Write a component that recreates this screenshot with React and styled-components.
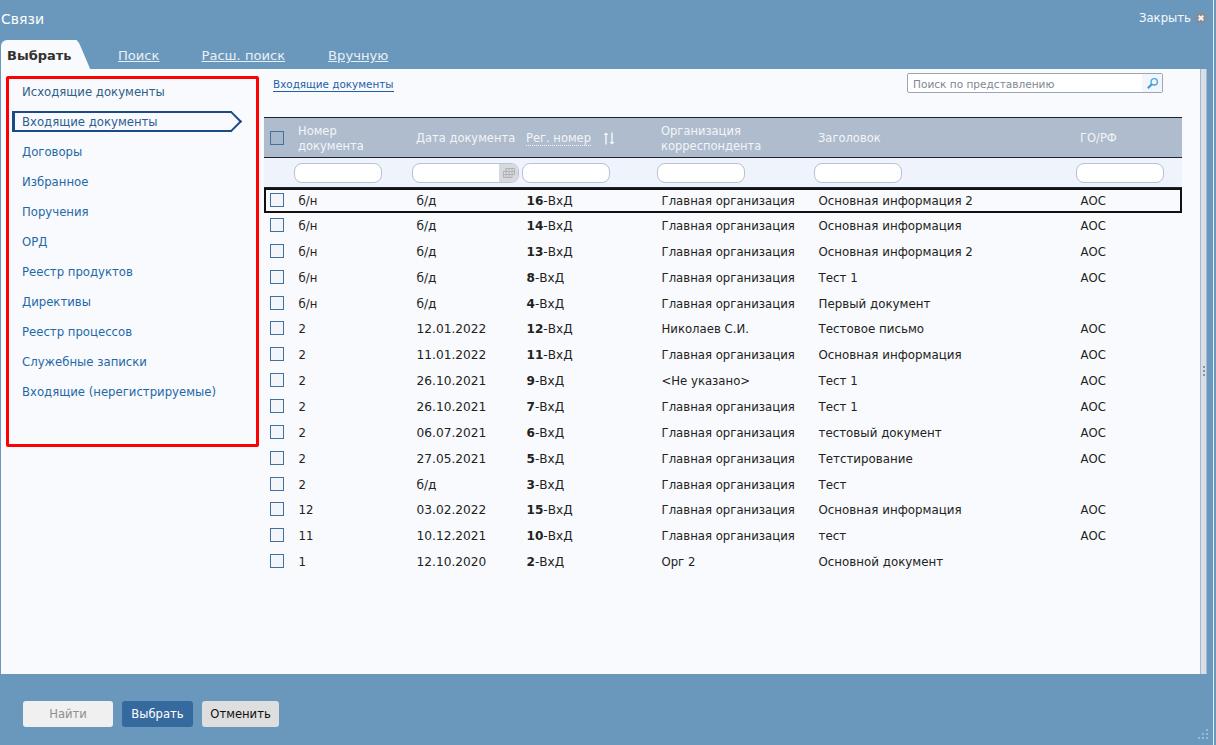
import React from 'react';
import styled, { createGlobalStyle } from 'styled-components';

const GlobalStyle = createGlobalStyle`
  html, body { margin: 0; padding: 0; background: #6a98bd; }
  body { font-family: "DejaVu Sans", Verdana, sans-serif; font-size: 11.6px; color: #222; overflow: hidden; }
`;

const COLUMNS = '30px 118px 110px 135px 157px 262px 106px';

const Page = styled.div`
  width: 1216px;
  height: 745px;
  display: flex;
  background: #6a98bd;
`;
const Win = styled.div`
  width: 1213px;
  height: 745px;
  border-right: 1px solid #e4edf4;
  display: flex;
  flex-direction: column;
  position: relative;
`;
const TitleBar = styled.div`
  height: 40px;
  flex: none;
  display: flex;
  justify-content: space-between;
  align-items: flex-start;
  padding: 10px 6px 0 1px;
  box-sizing: border-box;
  color: #fff;
`;
const Title = styled.div`
  font-size: 14px;
  line-height: 18px;
`;
const Close = styled.div`
  display: flex;
  align-items: center;
  gap: 4px;
  font-size: 11.7px;
  line-height: 16px;
  color: #f4f8fb;
`;
const CloseIcon = styled.svg`
  flex: none;
`;
const TabBar = styled.div`
  height: 29px;
  flex: none;
  display: flex;
  padding-left: 1px;
`;
const ActiveTab = styled.div`
  position: relative;
  width: 76px;
  background: #f9fafd;
  border-top-left-radius: 6px;
  font-weight: bold;
  font-size: 13px;
  line-height: 31px;
  color: #33302e;
  padding-left: 6px;
  box-sizing: border-box;
  margin-right: 29px;
  &::after {
    content: '';
    position: absolute;
    top: 0;
    bottom: 0;
    right: -7px;
    width: 14px;
    background: #f9fafd;
    transform: skewX(23deg);
    border-top-right-radius: 4px;
  }
`;
const Tab = styled.a`
  font-size: 13.1px;
  line-height: 32px;
  color: #e8f0f6;
  text-decoration: underline;
  margin-left: ${p => p.$gap}px;
`;
const Main = styled.div`
  height: 605px;
  flex: none;
  margin: 0 6px 0 1px;
  display: flex;
  background: #f9fafd;
`;
const Content = styled.div`
  flex: 1;
  display: flex;
  min-width: 0;
`;
const Splitter = styled.div`
  width: 7px;
  flex: none;
  box-sizing: border-box;
  background: #d8dfe8;
  border-left: 1px solid #a9b7c9;
  border-right: 1px solid #a9b7c9;
  display: flex;
  flex-direction: column;
  align-items: center;
  justify-content: center;
  gap: 2px;
  padding-bottom: 1px;
`;
const SplitDot = styled.span`
  width: 2px;
  height: 2px;
  background: #8493a5;
`;
const Side = styled.nav`
  width: 253px;
  height: 371px;
  flex: none;
  box-sizing: border-box;
  margin: 7px 0 0 5px;
  border: 3px solid #ff0000;
  border-radius: 2px;
  padding: 0 0 0 3px;
`;
const NavItem = styled.a`
  display: block;
  height: 30px;
  line-height: 26px;
  padding-left: 10px;
  font-size: 11.7px;
  color: ${p => (p.$dim ? '#2f5f88' : '#1f69a8')};
  white-space: nowrap;
`;
const ActiveItem = styled.a`
  display: block;
  position: relative;
  width: 220px;
  height: 21px;
  box-sizing: border-box;
  margin: 2px 0 7px;
  border: 2px solid #1c4a86;
  border-left-width: 3px;
  border-right: none;
  line-height: 18px;
  padding-left: 7px;
  font-size: 11.7px;
  color: #2b5f8f;
  &::after {
    content: '';
    position: absolute;
    right: -7px;
    top: 1px;
    width: 15px;
    height: 15px;
    box-sizing: border-box;
    border-top: 2px solid #1c4a86;
    border-right: 2px solid #1c4a86;
    transform: rotate(45deg);
  }
`;
const Right = styled.div`
  flex: 1;
  min-width: 0;
  padding-left: 5px;
`;
const TopLine = styled.div`
  height: 48px;
  width: 899px;
  display: flex;
  justify-content: space-between;
  align-items: flex-start;
`;
const Crumb = styled.a`
  font-size: 10.4px;
  line-height: 13px;
  margin: 9px 0 0 9px;
  color: #1f5fa8;
  border-bottom: 1px solid #1f5fa8;
`;
const Search = styled.div`
  width: 256px;
  height: 20px;
  margin-top: 4px;
  box-sizing: border-box;
  border: 1px solid #9aa5b5;
  border-radius: 2px;
  background: #fff;
  display: flex;
  justify-content: space-between;
  font-size: 10.55px;
  line-height: 20px;
  color: #7d8893;
  padding-left: 5px;
`;
const SearchBtn = styled.span`
  width: 20px;
  background: #f2f5fa;
  display: flex;
  align-items: center;
  justify-content: center;
`;
const Table = styled.div`
  width: 918px;
`;
const HeadRow = styled.div`
  display: grid;
  grid-template-columns: ${COLUMNS};
  height: 41px;
  box-sizing: border-box;
  background: #afbccd;
  border-top: 1px solid #1b2430;
  border-bottom: 1px solid #1b2430;
  padding-top: 2px;
  align-items: center;
  color: #f3f5f8;
  font-size: 11.5px;
  line-height: 15px;
`;
const HeadCell = styled.div`
  padding-left: 4px;
  white-space: nowrap;
  display: flex;
  align-items: center;
  gap: 12px;
`;
const Sortable = styled.span`
  border-bottom: 1px dotted #f3f5f8;
  line-height: 14px;
`;
const FilterRow = styled.div`
  display: grid;
  grid-template-columns: ${COLUMNS};
  height: 30px;
  box-sizing: border-box;
  background: #eef3fc;
  border-bottom: 1px solid #1b2430;
  align-items: center;
`;
const FilterInput = styled.div`
  width: 88px;
  height: 20px;
  box-sizing: border-box;
  border: 1px solid #b6c2d5;
  border-radius: 8px;
  background: #fff;
`;
const DateInput = styled(FilterInput)`
  width: 107px;
  display: flex;
  justify-content: flex-end;
  overflow: hidden;
`;
const DateBtn = styled.span`
  width: 19px;
  background: #d6d9dd;
  display: flex;
  align-items: center;
  justify-content: center;
`;
const Row = styled.div`
  display: grid;
  grid-template-columns: ${COLUMNS};
  height: ${p => (p.$current ? 25 : 25.86)}px;
  box-sizing: border-box;
  align-items: center;
  box-shadow: ${p => (p.$current ? 'inset 0 0 0 2px #111' : 'none')};
  color: #222;
`;
const Cell = styled.div`
  padding-left: 4.5px;
  white-space: nowrap;
  font-size: ${p => p.$size || 11.7}px;
`;
const Box = styled.span`
  display: block;
  width: 14px;
  height: 14px;
  box-sizing: border-box;
  margin-left: 6px;
  margin-top: -2px;
  border: 1.5px solid #44719c;
  background: ${p => (p.$head ? '#a8b8cc' : '#f2f6fb')};
`;
const Footer = styled.div`
  flex: 1;
  display: flex;
  align-items: flex-start;
  gap: 9px;
  padding: 27px 0 0 23px;
  position: relative;
`;
const Btn = styled.button`
  width: ${p => p.$w}px;
  height: 26px;
  border: none;
  border-radius: 3px;
  padding: 0;
  font-family: inherit;
  font-size: 11.6px;
  background: ${p => p.$bg};
  color: ${p => p.$fg};
`;
const Grip = styled.svg`
  position: absolute;
  right: 4px;
  bottom: 5px;
`;

const nav = ['Договоры', 'Избранное', 'Поручения', 'ОРД', 'Реестр продуктов', 'Директивы', 'Реестр процессов', 'Служебные записки', 'Входящие (нерегистрируемые)'];

const MO = 'Главная организация';
const rows = [
  ['б/н', 'б/д', '16', MO, 'Основная информация 2', 'АОС'],
  ['б/н', 'б/д', '14', MO, 'Основная информация', 'АОС'],
  ['б/н', 'б/д', '13', MO, 'Основная информация 2', 'АОС'],
  ['б/н', 'б/д', '8', MO, 'Тест 1', 'АОС'],
  ['б/н', 'б/д', '4', MO, 'Первый документ', ''],
  ['2', '12.01.2022', '12', 'Николаев С.И.', 'Тестовое письмо', 'АОС'],
  ['2', '11.01.2022', '11', MO, 'Основная информация', 'АОС'],
  ['2', '26.10.2021', '9', '<Не указано>', 'Тест 1', 'АОС'],
  ['2', '26.10.2021', '7', MO, 'Тест 1', 'АОС'],
  ['2', '06.07.2021', '6', MO, 'тестовый документ', 'АОС'],
  ['2', '27.05.2021', '5', MO, 'Тетстирование', 'АОС'],
  ['2', 'б/д', '3', MO, 'Тест', ''],
  ['12', '03.02.2022', '15', MO, 'Основная информация', 'АОС'],
  ['11', '10.12.2021', '10', MO, 'тест', 'АОС'],
  ['1', '12.10.2020', '2', 'Орг 2', 'Основной документ', ''],
];

export default function App() {
  return (
    <Page>
      <GlobalStyle />
      <Win>
        <TitleBar>
          <Title>Связи</Title>
          <Close>
            Закрыть
            <CloseIcon width="12" height="12" viewBox="0 0 12 12">
              <circle cx="6" cy="6" r="5.8" fill="#868d94" />
              <path d="M3.7 3.700l4.600 4.600M8.300 3.700l-4.600 4.600" stroke="#f4f4f4" strokeWidth="2" />
            </CloseIcon>
          </Close>
        </TitleBar>
        <TabBar>
          <ActiveTab>Выбрать</ActiveTab>
          <Tab $gap={12}>Поиск</Tab>
          <Tab $gap={42}>Расш. поиск</Tab>
          <Tab $gap={43}>Вручную</Tab>
        </TabBar>
        <Main>
          <Content>
            <Side>
              <NavItem $dim>Исходящие документы</NavItem>
              <ActiveItem>Входящие документы</ActiveItem>
              {nav.map(n => <NavItem key={n}>{n}</NavItem>)}
            </Side>
            <Right>
              <TopLine>
                <Crumb>Входящие документы</Crumb>
                <Search>
                  Поиск по представлению
                  <SearchBtn>
                    <svg width="13" height="13" viewBox="0 0 13 13" fill="none">
                      <circle cx="8.200" cy="4.800" r="3.200" stroke="#4aa6e6" strokeWidth="1.400" />
                      <path d="M5.800 7.200L1.800 11.200" stroke="#3a98dc" strokeWidth="2" />
                    </svg>
                  </SearchBtn>
                </Search>
              </TopLine>
              <Table>
                <HeadRow>
                  <Box $head />
                  <HeadCell>Номер<br />документа</HeadCell>
                  <HeadCell>Дата документа</HeadCell>
                  <HeadCell>
                    <Sortable>Рег. номер</Sortable>
                    <svg width="12" height="13" viewBox="0 0 12 13" fill="#f6f8fb">
                      <path d="M2.300 12.500V3H.5L3 .5 5.500 3H3.700v9.500zM8.300.5H9.700V10H11.500L9 12.500 6.500 10H8.300z" />
                    </svg>
                  </HeadCell>
                  <HeadCell>Организация<br />корреспондента</HeadCell>
                  <HeadCell>Заголовок</HeadCell>
                  <HeadCell>ГО/РФ</HeadCell>
                </HeadRow>
                <FilterRow>
                  <span />
                  <FilterInput />
                  <DateInput>
                    <DateBtn>
                      <svg width="12" height="10" viewBox="0 0 12 10" fill="none" stroke="#b0b4b9" strokeWidth="1">
                        <path d="M3 .5h8.500v6H9v3H.5v-6H3zM.5 3.500H11.500M.5 6.500H9M3 .5v9M6 .5v9M9 .5v6" />
                      </svg>
                    </DateBtn>
                  </DateInput>
                  <FilterInput />
                  <FilterInput />
                  <FilterInput />
                  <FilterInput />
                </FilterRow>
                {rows.map((r, i) => (
                  <Row key={i} $current={i === 0}>
                    <Box />
                    <Cell>{r[0]}</Cell>
                    <Cell $size={12.2}>{r[1]}</Cell>
                    <Cell $size={12.1}><b>{r[2]}</b>-ВхД</Cell>
                    <Cell>{r[3]}</Cell>
                    <Cell $size={11.85}>{r[4]}</Cell>
                    <Cell>{r[5]}</Cell>
                  </Row>
                ))}
              </Table>
            </Right>
          </Content>
          <Splitter>
            <SplitDot />
            <SplitDot />
            <SplitDot />
          </Splitter>
        </Main>
        <Footer>
          <Btn $w={90} $bg="#f0f0f0" $fg="#8f8f8f">Найти</Btn>
          <Btn $w={71} $bg="#366a9f" $fg="#fff">Выбрать</Btn>
          <Btn $w={77} $bg="#dedede" $fg="#111">Отменить</Btn>
          <Grip width="11" height="11" viewBox="0 0 11 11" fill="#9bbad3">
            <rect x="8" y="0" width="2" height="2" />
            <rect x="4" y="4" width="2" height="2" />
            <rect x="8" y="4" width="2" height="2" />
            <rect x="0" y="8" width="2" height="2" />
            <rect x="4" y="8" width="2" height="2" />
            <rect x="8" y="8" width="2" height="2" />
          </Grip>
        </Footer>
      </Win>
    </Page>
  );
}
